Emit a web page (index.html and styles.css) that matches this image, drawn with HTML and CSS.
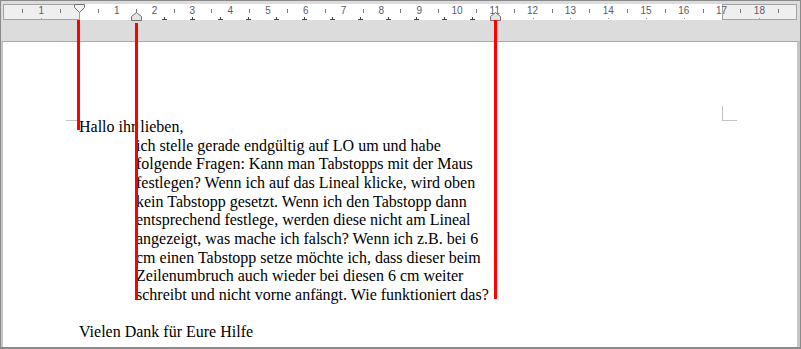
FILE: index.html
```html
<!DOCTYPE html>
<html lang="de">
<head>
  <meta charset="UTF-8" />
  <meta name="viewport" content="width=device-width, initial-scale=1.0"/>
  <title>Lineal und Tabstopps</title>
  <link rel="stylesheet" href="styles.css">
</head>
<body>
  <div class="window">
    <div class="ruler-wrap">
      <div class="ruler" id="ruler">
        <div class="ruler-margin margin-left"></div>
        <div class="ruler-body"></div>
        <div class="ruler-margin margin-right"></div>

        <svg class="indent indent-first" width="11" height="9" viewBox="0 0 11 9">
          <polygon points="0.5,0.5 10.5,0.5 10.5,3.5 5.5,8.5 0.5,3.5" />
        </svg>
        <svg class="indent indent-hang" width="11" height="9" viewBox="0 0 11 9">
          <polygon points="5.5,0.5 10.5,4.5 10.5,8.5 0.5,8.5 0.5,4.5" />
        </svg>
        <svg class="indent indent-right" width="11" height="9" viewBox="0 0 11 9">
          <polygon points="5.5,0.5 10.5,4.5 10.5,8.5 0.5,8.5 0.5,4.5" />
        </svg>
      </div>
    </div>

    <div class="page">
      <div class="text">
        <p>Hallo ihr lieben,</p>
        <div class="hanging">
          <p>ich stelle gerade endgültig auf LO um und habe</p>
          <p>folgende Fragen: Kann man Tabstopps mit der Maus</p>
          <p>festlegen? Wenn ich auf das Lineal klicke, wird oben</p>
          <p>kein Tabstopp gesetzt. Wenn ich den Tabstopp dann</p>
          <p>entsprechend festlege, werden diese nicht am Lineal</p>
          <p>angezeigt, was mache ich falsch? Wenn ich z.B. bei 6</p>
          <p>cm einen Tabstopp setze möchte ich, dass dieser beim</p>
          <p>Zeilenumbruch auch wieder bei diesen 6 cm weiter</p>
          <p>schreibt und nicht vorne anfängt. Wie funktioniert das?</p>
        </div>
        <p class="empty"></p>
        <p>Vielen Dank für Eure Hilfe</p>
      </div>
    </div>

    <!-- red marker lines drawn over the screenshot -->
    <div class="guide guide-first"></div>
    <div class="guide guide-hang"></div>
    <div class="guide guide-right"></div>
  </div>

  <script>
    const ruler = document.getElementById("ruler");
    const origin = 79 - 3;   // left page margin, relative to ruler
    const cm = 37.8;

    function add(cls, left, text) {
      const el = document.createElement("div");
      el.className = cls;
      el.style.left = left + "px";
      if (text) el.textContent = text;
      ruler.appendChild(el);
    }

    // numbers: one in the left margin, 1..18 on the page
    add("num", origin - cm, "1");
    add("cm-tick", Math.round(origin - cm));
    for (let i = 1; i <= 18; i++) {
      const x = origin + i * cm;
      add("num", x, String(i));
      // small marks only where no tab stop is drawn
      if (x + 3 > 480) add("cm-tick", Math.round(x));
    }

    // half centimetre ticks
    for (let i = -2; i <= 18; i++) {
      add("half", Math.round(origin + cm / 2 + i * cm));
    }

    // default tab stops after the hanging indent
    for (let x = 136 + 28; x <= 472; x += 28) {
      add("tab", x - 3 - 2);
    }
  </script>
</body>
</html>
```

FILE: styles.css
```css
* {
  box-sizing: border-box;
}
body {
  margin: 0;
  width: 801px;
  height: 349px;
  overflow: hidden;
  background: #dcdcdc;
}
.window {
  position: relative;
  width: 801px;
  height: 349px;
  display: flex;
  flex-direction: column;
  background: #dcdcdc;
  border: 1px solid #8a8a8a;
  border-bottom-width: 2px;
}

/* ruler */
.ruler-wrap {
  padding: 3px 3px 0 2px;
  margin-bottom: 21px;
}
.ruler {
  position: relative;
  height: 16px;
  display: flex;
  background: #fff;
  font-family: "Liberation Sans", Arial, sans-serif;
}
.ruler-margin {
  height: 16px;
  background: #efefef;
  border: 1px solid #a3a3a3;
}
.margin-left {
  width: 77px;
}
.margin-right {
  width: 75px;
}
.ruler-body {
  flex: 1;
}
.num {
  position: absolute;
  top: -1px;
  transform: translateX(-50%);
  font-size: 10px;
  line-height: 16px;
  color: #5b5b68;
}
.half {
  position: absolute;
  top: 5px;
  width: 1px;
  height: 4px;
  background: #7a7a7a;
}
.cm-tick {
  position: absolute;
  top: 14px;
  width: 1px;
  height: 1px;
  background: #9a9a9a;
}
.tab {
  position: absolute;
  bottom: 0;
  width: 5px;
  height: 1px;
  background: #4a4a4a;
}
.tab::before {
  content: "";
  position: absolute;
  left: 2px;
  bottom: 1px;
  width: 1px;
  height: 2px;
  background: #4a4a4a;
}
.indent {
  position: absolute;
  display: block;
  z-index: 2;
}
.indent polygon {
  stroke: #707070;
  stroke-width: 1;
  fill: #f2f2f2;
}
.indent-first {
  left: 71px;
  top: 0;
}
.indent-hang {
  left: 128px;
  top: 8px;
}
.indent-right {
  left: 487px;
  top: 8px;
}
.indent-hang polygon,
.indent-right polygon {
  fill: #e4e4e4;
}

/* page */
.page {
  position: relative;
  flex: 1;
  background: #fff;
  border-top: 1px solid #a8a8a8;
  border-left: 2px solid #c6c6c6;
  border-right: 3px solid #c6c6c6;
  padding: 76px 0 0 76px;
}
.page::before,
.page::after {
  content: "";
  position: absolute;
  top: 64px;
  width: 13px;
  height: 14px;
  border-bottom: 1px solid #c4c4c4;
}
.page::before {
  left: 63px;
  border-right: 1px solid #c4c4c4;
}
.page::after {
  left: 719px;
  width: 14px;
  border-left: 1px solid #c4c4c4;
}
.text {
  font-family: "Liberation Serif", "Times New Roman", serif;
  font-size: 16px;
  line-height: 18.67px;
  color: #000;
}
.text p {
  margin: 0;
  white-space: nowrap;
}
.text .empty {
  height: 18.67px;
}
.hanging {
  padding-left: 57px;
}

/* red guides */
.guide {
  position: absolute;
  width: 3px;
  background: #ff0000;
  z-index: 3;
}
.guide-first {
  left: 76px;
  top: 19px;
  height: 110px;
}
.guide-hang {
  left: 134px;
  top: 22px;
  height: 277px;
}
.guide-right {
  left: 493px;
  top: 19px;
  height: 279px;
}
```
